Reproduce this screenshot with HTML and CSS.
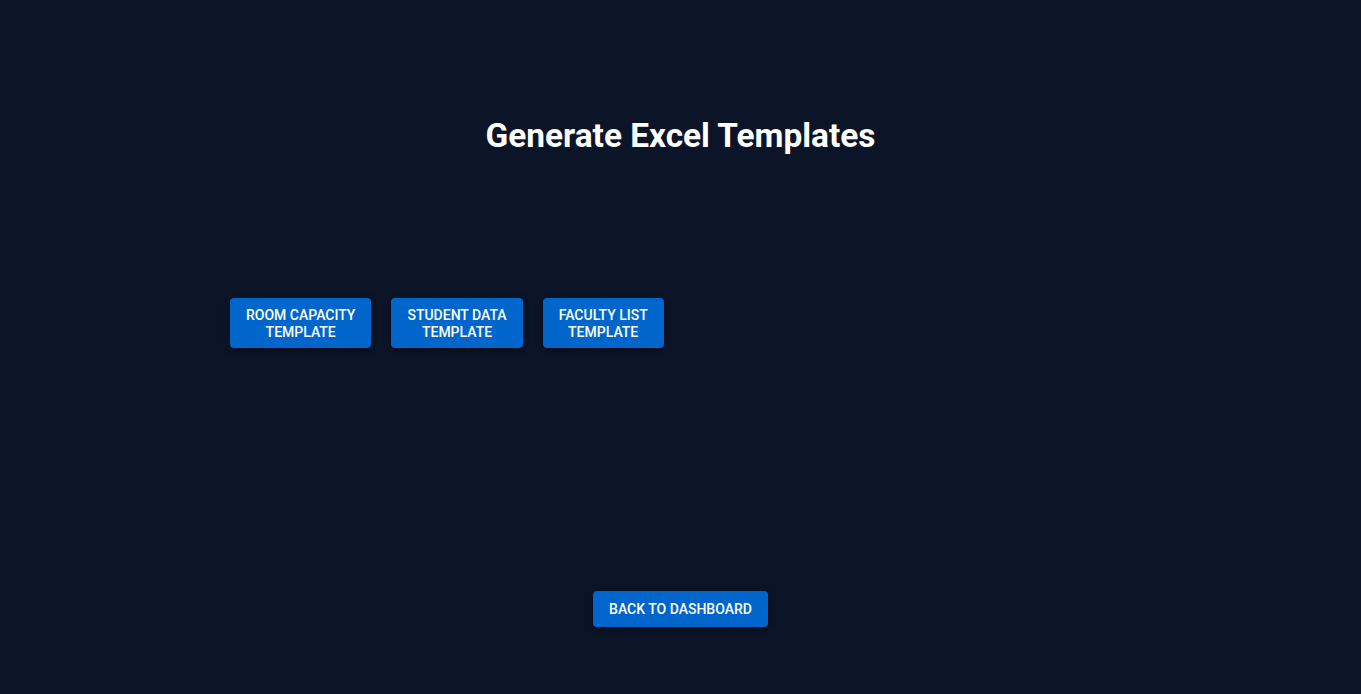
FILE: index.html
```html
<!DOCTYPE html>
<html lang="en">
<head>
  <meta charset="UTF-8" />
  <meta name="viewport" content="width=device-width, initial-scale=1.0"/>
  <title>Excel Templates</title>
  <link rel="stylesheet" href="styles.css">
</head>
<body>
  <main class="pagina">
    <h1 class="titulo">Generate Excel Templates</h1>

    <div class="templates">
      <button class="btn btn-template">Room Capacity<br>Template</button>
      <button class="btn btn-template">Student Data<br>Template</button>
      <button class="btn btn-template">Faculty List<br>Template</button>
    </div>

    <div class="rodape">
      <button class="btn btn-voltar">Back to Dashboard</button>
    </div>
  </main>
</body>
</html>
```

FILE: styles.css
```css
html, body {
  margin: 0;
  height: 100%;
}
body {
  font-family: Roboto, 'Liberation Sans', sans-serif;
  background: #0c1427;
  color: #fff;
}
.pagina {
  width: 901px;
  margin: 0 auto;
  padding-top: 115px;
}
.titulo {
  margin: 0;
  text-align: center;
  font-size: 33.4px;
  font-weight: 700;
  line-height: 42px;
}
.templates {
  display: flex;
  gap: 20px;
  margin-top: 141px;
}
.btn {
  background-color: #0066cc;
  color: #fff;
  border: none;
  border-radius: 4px;
  font-family: Roboto, 'Liberation Sans', sans-serif;
  font-size: 14px;
  font-weight: 500;
  text-transform: uppercase;
  letter-spacing: 0;
  cursor: pointer;
  box-shadow: 0 3px 3px -2px rgba(0,0,0,0.3), 0 2px 4px 0 rgba(0,0,0,0.2), 0 1px 8px 0 rgba(0,0,0,0.16);
}
.btn-template {
  padding: 9px 16px 7px;
  line-height: 17px;
}
.rodape {
  display: flex;
  justify-content: center;
  margin-top: 243px;
}
.btn-voltar {
  padding: 6px 16px;
  line-height: 24px;
}
```
